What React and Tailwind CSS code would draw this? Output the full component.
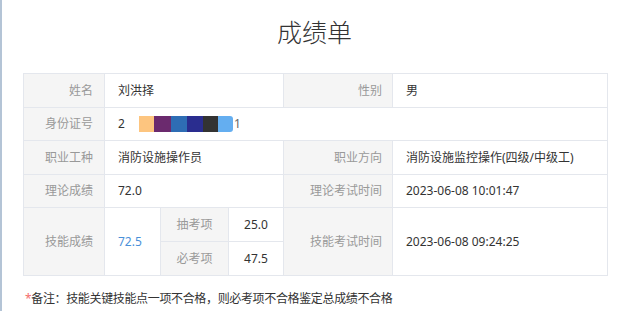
export default function App() {
  const font = { fontFamily: '"Noto Sans", "Noto Sans CJK SC", sans-serif' };
  const lab = "bg-[#f5f5f5] text-[#999] border-r border-b border-[#e4e7ed] flex items-center justify-end text-[12px]";
  const val = "bg-white text-[#333] border-r border-b border-[#e4e7ed] flex items-center pl-[13px] text-[12px]";
  return (
    <div className="w-[619px] h-[311px] bg-white border-l-2 border-[#b4c4d6] relative" style={font}>
      <div className="pt-[15px] pl-[8px] text-center text-[25px] leading-[34px] text-[#333] font-light">成绩单</div>
      <div
        className="absolute left-[21px] top-[73px] grid border-l border-t border-[#e4e7ed]"
        style={{ gridTemplateColumns: "81px 56px 68px 55px 109px 215px", gridTemplateRows: "34px 33px 34px 33px 34px 34px" }}
      >
        <div className={lab + " pr-[11px]"}>姓名</div>
        <div className={val + " col-span-3"}>刘洪择</div>
        <div className={lab + " pr-[10px]"}>性别</div>
        <div className={val}>男</div>

        <div className={lab + " pr-[11px]"}>身份证号</div>
        <div className={val + " col-span-5"}>
          <span>2</span>
          <span className="ml-[14px] flex h-[16px]">
            <span className="w-[15px] bg-[#fdc57f]"></span>
            <span className="w-[17px] bg-[#6b2a6e]"></span>
            <span className="w-[16px] bg-[#2e6db4]"></span>
            <span className="w-[16px] bg-[#2a2d8f]"></span>
            <span className="w-[15px] bg-[#333333]"></span>
            <span className="w-[15px] bg-[#64aef0] rounded-r-[3px]"></span>
          </span>
          <span className="ml-[1px] text-[#666]">1</span>
        </div>

        <div className={lab + " pr-[11px]"}>职业工种</div>
        <div className={val + " col-span-3"}>消防设施操作员</div>
        <div className={lab + " pr-[10px]"}>职业方向</div>
        <div className={val}>消防设施监控操作(四级/中级工)</div>

        <div className={lab + " pr-[11px]"}>理论成绩</div>
        <div className={val + " col-span-3"}>72.0</div>
        <div className={lab + " pr-[10px]"}>理论考试时间</div>
        <div className={val}>2023-06-08 10:01:47</div>

        <div className={lab + " pr-[11px] row-span-2"}>技能成绩</div>
        <div className={val + " row-span-2"}><span className="text-[#4a90d9]">72.5</span></div>
        <div className={lab + " !justify-center"}>抽考项</div>
        <div className={val + " !pl-0 justify-center"}>25.0</div>
        <div className={lab + " pr-[10px] row-span-2"}>技能考试时间</div>
        <div className={val + " row-span-2"}>2023-06-08 09:24:25</div>
        <div className={lab + " !justify-center"}>必考项</div>
        <div className={val + " !pl-0 justify-center"}>47.5</div>
      </div>
      <div className="absolute left-[23px] top-[290px] text-[12px] leading-[18px] text-[#333] tracking-[-0.35px]">
        <span className="text-[#f56c6c]">*</span>备注：技能关键技能点一项不合格，则必考项不合格鉴定总成绩不合格
      </div>
    </div>
  );
}
